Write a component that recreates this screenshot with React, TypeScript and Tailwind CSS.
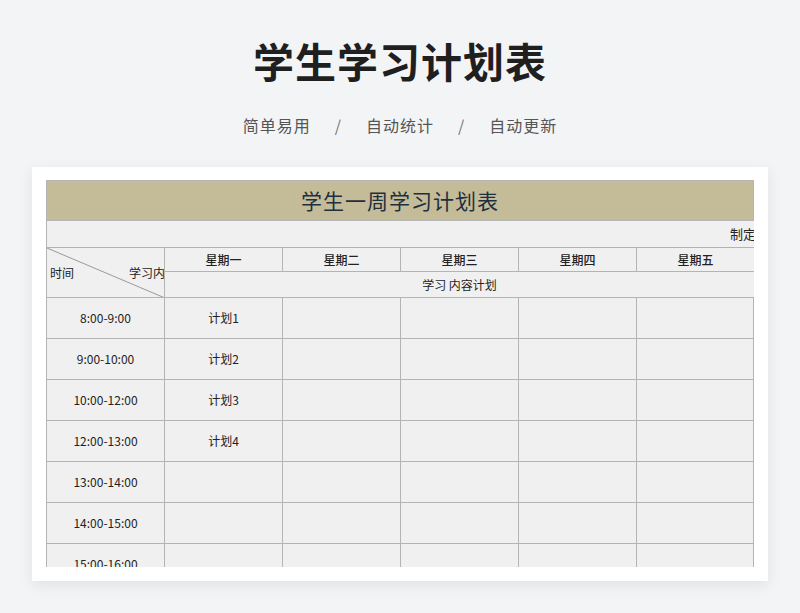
import React from "react";

const days = ["星期一", "星期二", "星期三", "星期四", "星期五"];
const times = ["8:00-9:00", "9:00-10:00", "10:00-12:00", "12:00-13:00", "13:00-14:00", "14:00-15:00", "15:00-16:00"];
const plans = ["计划1", "计划2", "计划3", "计划4"];
const B = "border-[#b4b4b4]";

export default function App() {
  return (
    <div className="w-[800px] h-[613px] bg-[#f3f4f6] flex flex-col items-center overflow-hidden" style={{ fontFamily: '"Noto Sans CJK SC", "Noto Sans", sans-serif' }}>
      <h1 className="mt-[32px] text-[41px] leading-[56px] font-bold text-[#1f1f1f] tracking-[1px]">学生学习计划表</h1>
      <div className="mt-[26px] text-[16px] leading-[22px] text-[#555] flex gap-[24px] tracking-[1px]">
        <span>简单易用</span><span className="text-[#777]">/</span><span>自动统计</span><span className="text-[#777]">/</span><span>自动更新</span>
      </div>
      <div className="mt-[31px] w-[736px] h-[414px] bg-white shadow-[0_4px_14px_rgba(0,0,0,0.08)] pt-[13px] pl-[14px]">
        <div className="w-[708px] h-[387px] overflow-hidden bg-[#f0f0f0] text-[#222]">
          <div className={`h-[41px] bg-[#c4bc98] border ${B} flex items-center justify-center text-[21px] text-[#1e3040] tracking-[1px]`}>学生一周学习计划表</div>
          <div className={`h-[26px] border-l ${B} flex items-center justify-end text-[13px] whitespace-nowrap`}><span className="mr-[-28px]">制定人：</span></div>
          <div className="flex">
            <div className={`relative w-[118px] h-[50px] border-l border-t ${B} shrink-0 overflow-hidden`}>
              <svg className="absolute inset-0" width="118" height="50"><line x1="0" y1="0" x2="118" y2="50" stroke="#999" strokeWidth="1" /></svg>
              <span className="absolute left-[3px] top-[16px] text-[12px]">时间</span>
              <span className="absolute left-[82px] top-[16px] text-[12px] whitespace-nowrap">学习内容</span>
            </div>
            <div className="flex-1 relative">
              <div className="flex h-[24px]">
                {days.map((d) => (
                  <div key={d} className={`w-[118px] shrink-0 border-l border-t ${B} flex items-center justify-center text-[12px] font-medium`}>{d}</div>
                ))}
              </div>
              <div className={`h-[26px] border-l border-t ${B} flex items-center justify-center text-[12px] bg-[#f0f0f0]`}>学习 内容计划</div>
            </div>
          </div>
          {times.map((t, i) => (
            <div key={t} className="flex h-[41px]">
              <div className={`w-[118px] shrink-0 border-l border-t ${B} flex items-center justify-center text-[12px]`}>{t}</div>
              {days.map((d, j) => (
                <div key={d} className={`w-[118px] shrink-0 border-l border-t ${B} ${j === 4 ? "border-r" : ""} flex items-center justify-center text-[12px]`}>
                  {j === 0 && plans[i] ? plans[i] : ""}
                </div>
              ))}
            </div>
          ))}
        </div>
      </div>
    </div>
  );
}
